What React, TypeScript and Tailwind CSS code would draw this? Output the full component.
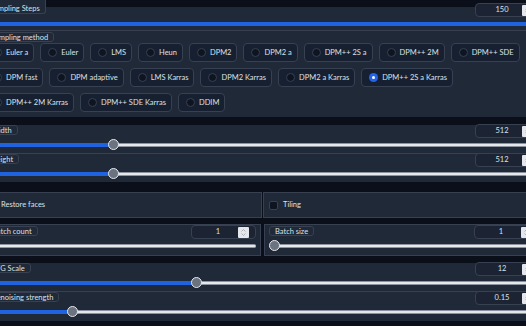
import React from "react";

const methods: string[] = [
  "Euler a", "Euler", "LMS", "Heun", "DPM2", "DPM2 a", "DPM++ 2S a", "DPM++ 2M", "DPM++ SDE",
  "DPM fast", "DPM adaptive", "LMS Karras", "DPM2 Karras", "DPM2 a Karras", "DPM++ 2S a Karras",
  "DPM++ 2M Karras", "DPM++ SDE Karras", "DDIM",
];
const selected = "DPM++ 2S a Karras";

function Label({ children, tall = false }: { children: React.ReactNode; tall?: boolean }) {
  return (
    <div
      className={
        tall
          ? "-mt-[4px] h-[14px] pt-[4px] px-[5px] leading-[9px] border-r border-b border-[#374151] rounded-br-[3px] bg-[#1f2937] whitespace-nowrap"
          : "h-[10px] px-[5px] leading-[9px] border border-[#374151] rounded-[3px] bg-[#1f2937] whitespace-nowrap"
      }
    >
      {children}
    </div>
  );
}

function Spinner() {
  return (
    <div className="w-[11px] h-[11px] shrink-0 bg-[#e5e7eb] rounded-[1px]">
      <svg width="11" height="11" viewBox="0 0 11 11" fill="none">
        <path d="M3.5 4.5 L5.5 2.5 L7.5 4.5" stroke="#9ca3af" strokeWidth="0.8" />
        <path d="M3.5 6.5 L5.5 8.5 L7.5 6.5" stroke="#9ca3af" strokeWidth="0.8" />
      </svg>
    </div>
  );
}

function NumberBox({ value }: { value: string }) {
  return (
    <div className="-mt-[1px] w-[65px] h-[14px] shrink-0 flex items-center pl-[6px] pr-[6px] rounded-[4px] border border-[#374151] bg-[#1c2433]">
      <span className="flex-1 text-center leading-[12px]">{value}</span>
      <Spinner />
    </div>
  );
}

function Track({ f }: { f: number }) {
  return (
    <div className="relative h-[11px] flex items-center">
      <div className="w-full h-[4px] flex">
        <div className="h-[4px] shrink-0 bg-[#1f63e0] rounded-l-full" style={{ width: `calc(5.5px + ${f} * (100% - 11px))` }} />
        <div className="flex-1 h-[4px] bg-[#e5e7eb] border-y border-[#8b93a1] rounded-r-full" />
      </div>
      <div
        className="absolute top-0 w-[11px] h-[11px] rounded-full bg-[#6b7280] border-[1.5px] border-[#e5e7eb]"
        style={{ left: `calc(${f} * (100% - 11px))` }}
      />
    </div>
  );
}

function SliderBody({ label, value, f, tall = false }: { label: string; value: string; f: number; tall?: boolean }) {
  return (
    <>
      <div className="flex justify-between items-start h-[14px]">
        <Label tall={tall}>{label}</Label>
        <NumberBox value={value} />
      </div>
      <Track f={f} />
    </>
  );
}

function Radio({ name }: { name: string }) {
  const on = name === selected;
  return (
    <div className="h-[19px] flex items-center gap-[4px] pl-[7px] pr-[5px] rounded-[4px] border border-[#374151] bg-[#172030] whitespace-nowrap">
      {on ? (
        <div className="w-[9px] h-[9px] rounded-full bg-[#2563eb] flex items-center justify-center">
          <div className="w-[3px] h-[3px] rounded-full bg-white" />
        </div>
      ) : (
        <div className="w-[9px] h-[9px] rounded-full border border-[#374151] bg-[#0f1520]" />
      )}
      <span className="leading-[10px]">{name}</span>
    </div>
  );
}

function Check({ label }: { label: string }) {
  return (
    <div className="flex-1 h-[26px] px-[5px] flex items-center gap-[5px] bg-[#1f2937] border border-[#374151]">
      <div className="w-[9px] h-[9px] rounded-[2px] border border-[#374151] bg-[#0f1520]" />
      <span>{label}</span>
    </div>
  );
}

export default function App() {
  return (
    <div className="w-[526px] h-[326px] overflow-hidden bg-[#0b0f19] font-[Lato,sans-serif] text-[7.5px] text-[#dde1e7]">
      <div className="-ml-[19px] w-[563px] flex flex-col">
        {/* Sampling Steps */}
        <div className="h-[31px] pl-[4px] pr-[4px] pt-[4px] border-b border-[#374151] bg-[linear-gradient(#0b0f19_0px,#0b0f19_7px,#1f2937_7px)]">
          <SliderBody label="Sampling Steps" value="150" f={1} tall />
        </div>
        {/* Sampling method */}
        <div className="h-[86px] px-[4px] pt-[1px] bg-[#1f2937]">
          <div className="flex">
            <Label>Sampling method</Label>
          </div>
          <div className="mt-[1px] flex flex-wrap gap-[6px]">
            {methods.map((m) => (
              <Radio key={m} name={m} />
            ))}
          </div>
        </div>
        {/* Width / Height */}
        <div className="mt-[8px] flex flex-col bg-[#1f2937]">
          <div className="h-[29px] px-[4px] border-b border-[#374151]">
            <SliderBody label="Width" value="512" f={(512 - 64) / 1984} />
          </div>
          <div className="h-[28px] px-[4px]">
            <SliderBody label="Height" value="512" f={(512 - 64) / 1984} />
          </div>
        </div>
        {/* Restore faces / Tiling */}
        <div className="mt-[10px] flex gap-[1px]">
          <Check label="Restore faces" />
          <Check label="Tiling" />
        </div>
        {/* Batch */}
        <div className="mt-[6px] flex gap-[3px]">
          <div className="flex-1 h-[32px] px-[4px] pt-[1px] bg-[#1f2937] border border-[#374151]">
            <SliderBody label="Batch count" value="1" f={0} />
          </div>
          <div className="flex-1 h-[32px] px-[4px] pt-[1px] bg-[#1f2937] border border-[#374151]">
            <SliderBody label="Batch size" value="1" f={0} />
          </div>
        </div>
        {/* CFG / Denoising */}
        <div className="mt-[7px] flex flex-col bg-[#1f2937]">
          <div className="h-[29px] px-[4px] border-b border-[#374151]">
            <SliderBody label="CFG Scale" value="12" f={(12 - 1) / 29} />
          </div>
          <div className="h-[29px] px-[4px]">
            <SliderBody label="Denoising strength" value="0.15" f={0.15} />
          </div>
        </div>
      </div>
    </div>
  );
}
